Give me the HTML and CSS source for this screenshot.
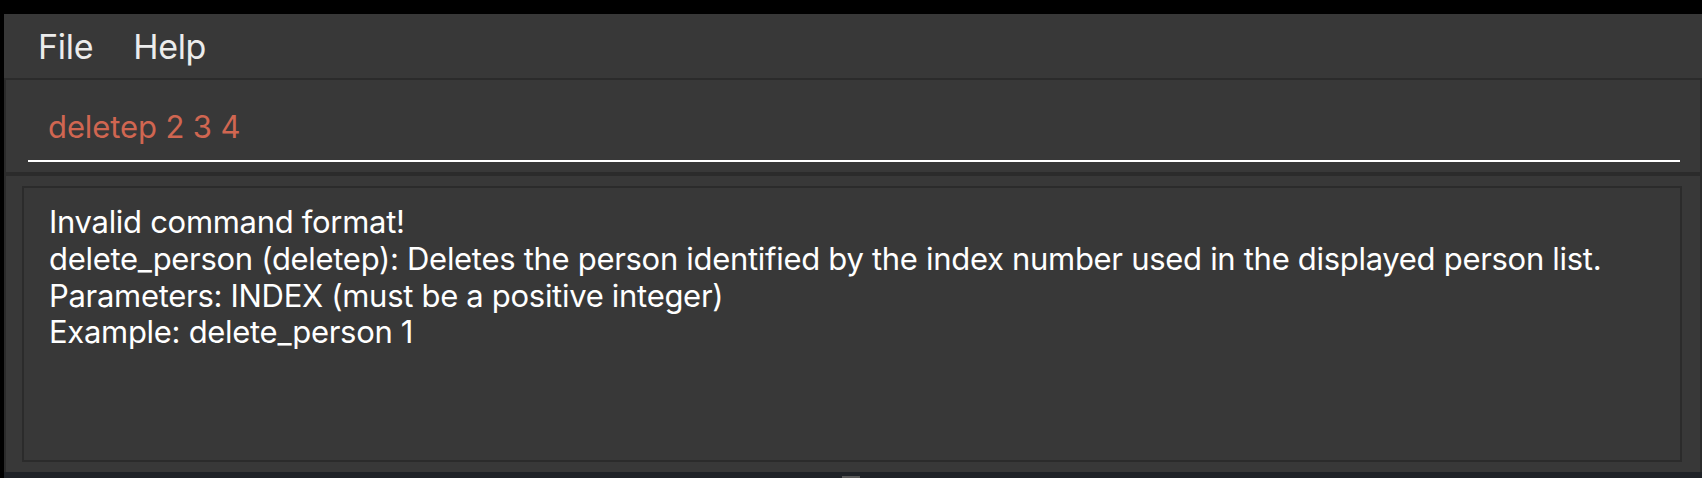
FILE: index.html
```html
<!DOCTYPE html>
<html>
<head>
<meta charset="utf-8">
<link rel="stylesheet" href="styles.css">
</head>
<body>
<div class="window">
  <div class="menubar">
    <span class="menu-item">File</span>
    <span class="menu-item">Help</span>
  </div>
  <div class="command-panel">
    <div class="command-field">deletep 2 3 4</div>
  </div>
  <div class="result-panel">
    <div class="result-box">
      <div class="line">Invalid command format!</div>
      <div class="line">delete_person (deletep): Deletes the person identified by the index number used in the displayed person list.</div>
      <div class="line">Parameters: INDEX (must be a positive integer)</div>
      <div class="line">Example: delete_person 1</div>
    </div>
  </div>
  <div class="status"><span class="handle"></span></div>
</div>
</body>
</html>
```
FILE: styles.css
```css
html, body {
  margin: 0;
  padding: 0;
  background: #000;
  width: 1702px;
  height: 478px;
  overflow: hidden;
}
body {
  font-family: Inter, "Noto Sans", sans-serif;
}
.window {
  margin-top: 14px;
  margin-left: 4px;
  width: 1698px;
  height: 464px;
  display: flex;
  flex-direction: column;
  background: #383838;
}
.menubar {
  height: 64px;
  flex: none;
  border-bottom: 2px solid #2b2b2b;
  display: flex;
  align-items: center;
  padding-left: 34px;
  gap: 40px;
  color: #ececec;
  font-size: 34px;
  letter-spacing: -0.3px;
}
.command-panel {
  height: 96px;
  flex: none;
  box-sizing: border-box;
  border-left: 2px solid #2b2b2b;
  border-right: 2px solid #2b2b2b;
  border-bottom: 4px solid #2b2b2b;
  display: flex;
  align-items: flex-end;
  padding: 0 20px 10px 22px;
}
.command-field {
  flex: 1;
  border-bottom: 2px solid #ffffff;
  color: #d06651;
  font-size: 31px;
  letter-spacing: -0.1px;
  line-height: 36px;
  padding: 0 0 15px 20px;
}
.result-panel {
  height: 296px;
  flex: none;
  box-sizing: border-box;
  border-left: 2px solid #2b2b2b;
  border-right: 2px solid #2b2b2b;
  padding: 10px 18px 10px 16px;
  display: flex;
}
.result-box {
  flex: 1;
  border: 2px solid #2b2b2b;
  padding: 16px 0 0 25px;
  color: #ffffff;
  font-size: 31px;
  letter-spacing: -0.3px;
  line-height: 36.8px;
}
.status {
  height: 6px;
  flex: none;
  background: #1f2227;
  position: relative;
}
.handle {
  position: absolute;
  left: 838px;
  top: 4px;
  width: 18px;
  height: 2px;
  background: #5a5a5a;
}
```
